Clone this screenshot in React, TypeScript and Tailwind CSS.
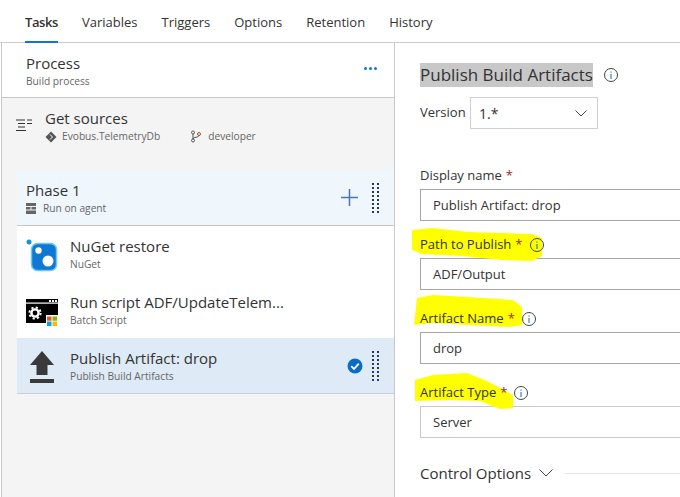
import React from "react";

const font = { fontFamily: '"Open Sans", "Noto Sans", sans-serif' };

function Info({ className = "" }: { className?: string }) {
  return (
    <svg width="16" height="16" viewBox="0 0 16 16" className={className} fill="none">
      <circle cx="8" cy="8" r="6.5" stroke="#444" strokeWidth="1" />
      <rect x="7.5" y="7" width="1" height="5" fill="#0b6cc4" />
      <rect x="7.5" y="4.5" width="1" height="1.2" fill="#0b6cc4" />
    </svg>
  );
}

function Grip() {
  return (
    <svg width="9" height="30" viewBox="0 0 9 30" className="shrink-0">
      {Array.from({ length: 8 }).map((_, i) => (
        <g key={i}>
          <rect x="1" y={i * 4} width="2" height="2" fill={i % 2 ? "#1e3f78" : "#333"} />
          <rect x="6" y={i * 4} width="2" height="2" fill={i % 2 ? "#1e3f78" : "#333"} />
        </g>
      ))}
    </svg>
  );
}

function NuGet() {
  return (
    <svg width="32" height="34" viewBox="0 0 32 34" className="shrink-0 mt-[4px]">
      <circle cx="3" cy="3" r="2.5" fill="#0d96e0" />
      <rect x="5.5" y="4.5" width="25" height="27" rx="6" fill="#0f78d4" stroke="#6cc8f2" strokeWidth="1.5" />
      <circle cx="12.5" cy="11.5" r="3.2" fill="#fff" />
      <circle cx="22" cy="22" r="5.5" fill="#fff" />
    </svg>
  );
}

function Batch() {
  return (
    <svg width="32" height="27" viewBox="0 0 32 27" className="shrink-0 mt-[5px]">
      <rect x="0" y="0" width="32" height="24" fill="#000" />
      <rect x="0" y="3.5" width="32" height="1.2" fill="#fff" />
      <rect x="23" y="1" width="2" height="2" fill="#fff" />
      <rect x="26" y="1" width="2" height="2" fill="#fff" />
      <rect x="29" y="1" width="2" height="2" fill="#fff" />
      <circle cx="9" cy="14" r="3.6" fill="none" stroke="#fff" strokeWidth="2.4" />
      <circle cx="9" cy="14" r="5.6" fill="none" stroke="#fff" strokeWidth="2" strokeDasharray="2.2 2.2" />
      <rect x="20" y="16" width="12" height="11" fill="#fff" />
      <rect x="21" y="17.5" width="4.5" height="4.2" fill="#f25022" />
      <rect x="26.5" y="17.5" width="4.5" height="4.2" fill="#7fba00" />
      <rect x="21" y="22.5" width="4.5" height="4.5" fill="#00a4ef" />
      <rect x="26.5" y="22.5" width="4.5" height="4.5" fill="#ffb900" />
    </svg>
  );
}

function Upload() {
  return (
    <svg width="24" height="32" viewBox="0 0 24 32" className="shrink-0 ml-[4px] mt-[2px]">
      <path d="M12 0 L24 14 L17.5 14 L17.5 24 L6.5 24 L6.5 14 L0 14 Z" fill="#3a3a3a" />
      <rect x="0" y="28" width="24" height="4" fill="#3a3a3a" />
    </svg>
  );
}

function Row({ icon, title, sub, selected }: { icon: React.ReactNode; title: string; sub: string; selected?: boolean }) {
  return (
    <div className={`h-[56px] flex items-center pl-[9px] pr-[14px] ${selected ? "bg-[#deeaf6] border-b border-[#c8d0d8]" : "bg-white"}`}>
      <div className="w-[44px] flex justify-start">{icon}</div>
      <div className="flex-1 min-w-0">
        <div className="text-[15px] leading-[20px] text-[#333]">{title}</div>
        <div className="text-[10.2px] leading-[15px] text-[#666] mt-[1px]">{sub}</div>
      </div>
      {selected && (
        <svg width="16" height="16" viewBox="0 0 16 16" className="mr-[8px]">
          <circle cx="8" cy="8" r="7.5" fill="#0b6cc4" />
          <path d="M4.2 8.2 L7 11 L11.8 5.6" fill="none" stroke="#fff" strokeWidth="1.8" />
        </svg>
      )}
      {selected && <Grip />}
    </div>
  );
}

function Field({ label, value, info, blob, labelClass = "mt-0", inputClass = "border-[#a6a6a6]" }: {
  label: string; value: string; info?: boolean; blob?: React.ReactNode; labelClass?: string; inputClass?: string;
}) {
  return (
    <div className={labelClass}>
      <div className="relative h-[20px] flex items-center pt-[2px] text-[13px] text-[#333]">
        {blob}
        <span className="relative">{label}</span>
        <span className="relative text-[#a4262c] ml-[4px]">*</span>
        {info && <Info className="relative ml-[6px]" />}
      </div>
      <div className={`mt-[4px] h-[32px] border border-r-0 flex items-center pl-[12px] pt-[2px] text-[13px] text-[#333] ${inputClass}`}>
        {value}
      </div>
    </div>
  );
}

export default function App() {
  const tabs = ["Variables", "Triggers", "Options", "Retention", "History"];
  return (
    <div style={font} className="w-[680px] h-[497px] overflow-hidden bg-white flex flex-col">
      <div className="h-[43px] border-b border-[#cccccc] flex gap-[24px] pl-[25px] text-[13px] text-[#333] shrink-0">
        <div className="h-[43px] pt-[13px] font-semibold tracking-[-0.4px] border-b-[2px] border-[#0b78d4]">Tasks</div>
        {tabs.map((t) => (
          <div key={t} className="h-[43px] pt-[13px]">{t}</div>
        ))}
      </div>
      <div className="flex flex-1 min-h-0">
        <div className="w-[394px] shrink-0 ml-[1px] border-l border-r border-[#c8c8c8] bg-[#f4f4f4] flex flex-col">
          <div className="h-[55px] bg-white border-b border-[#c8c8c8] flex items-center pl-[24px] pr-[17px] shrink-0">
            <div className="flex-1 mt-[2px]">
              <div className="text-[15px] leading-[20px] text-[#333]">Process</div>
              <div className="text-[10.2px] leading-[15px] text-[#666] mt-[1px]">Build process</div>
            </div>
            <div className="flex gap-[2px] -mt-[3px]">
              {[0, 1, 2].map((i) => <span key={i} className="w-[3px] h-[3px] rounded-full bg-[#0b78d4]" />)}
            </div>
          </div>
          <div className="h-[72px] flex pl-[14px] pt-[10px] shrink-0">
            <svg width="16" height="14" viewBox="0 0 16 14" className="mt-[10px] shrink-0">
              <path d="M0 2h9M11 2h5M2 5.5h7M11 5.5h5M2 9h7M0 12.5h10" stroke="#333" strokeWidth="1" fill="none" />
            </svg>
            <div className="ml-[13px]">
              <div className="text-[15px] leading-[20px] text-[#333]">Get sources</div>
              <div className="flex items-center text-[10.2px] leading-[15px] text-[#666] mt-[1px]">
                <svg width="12" height="12" viewBox="0 0 12 12" className="mr-[5px]">
                  <path d="M6 .5 L11.5 6 L6 11.5 L.5 6 Z" fill="#555" />
                  <path d="M5 3.5 L7.5 6 L5 8.5" fill="none" stroke="#fff" strokeWidth="1" />
                </svg>
                <span>Evobus.TelemetryDb</span>
                <svg width="12" height="13" viewBox="0 0 12 13" className="ml-[30px] mr-[6px]">
                  <circle cx="3" cy="2.5" r="1.5" fill="none" stroke="#555" />
                  <circle cx="3" cy="10.5" r="1.5" fill="none" stroke="#555" />
                  <circle cx="9" cy="4" r="1.5" fill="none" stroke="#a0522d" />
                  <path d="M3 4v5M9 5.5c0 2-6 1.5-6 3.5" fill="none" stroke="#555" />
                </svg>
                <span>developer</span>
              </div>
            </div>
          </div>
          <div className="ml-[15px] flex flex-col shrink-0">
            <div className="h-[56px] bg-[#eff6fc] border-b border-[#c8c8c8] flex items-center pl-[9px] pr-[14px]">
              <div className="flex-1">
                <div className="text-[15px] leading-[20px] text-[#333]">Phase 1</div>
                <div className="flex items-center text-[10.2px] leading-[15px] text-[#666] mt-[1px]">
                  <svg width="10" height="11" viewBox="0 0 10 11" className="mr-[7px]">
                    <path d="M0 0h10v11H0z" fill="#666" />
                    <path d="M0 3.5h10M0 7h10M5 3.5V7" stroke="#eff6fc" strokeWidth="1" />
                  </svg>
                  Run on agent
                </div>
              </div>
              <svg width="17" height="17" viewBox="0 0 17 17" className="mr-[13px]">
                <path d="M8.5 0v17M0 8.5h17" stroke="#4a76b8" strokeWidth="1.5" />
              </svg>
              <Grip />
            </div>
            <Row icon={<NuGet />} title="NuGet restore" sub="NuGet" />
            <Row icon={<Batch />} title="Run script ADF/UpdateTelem..." sub="Batch Script" />
            <Row icon={<Upload />} title="Publish Artifact: drop" sub="Publish Build Artifacts" selected />
          </div>
        </div>
        <div className="flex-1 min-w-0 pl-[25px] pt-[20px]">
          <div className="flex items-center h-[24px]">
            <span className="bg-[#c8c8c8] text-[17px] leading-[24px] text-[#333] w-[173px] whitespace-nowrap">Publish Build Artifacts</span>
            <Info className="ml-[10px]" />
          </div>
          <div className="flex items-center mt-[10px] text-[13px] text-[#333]">
            <span className="w-[50px]">Version</span>
            <div className="w-[128px] h-[32px] border border-[#d0d0d0] flex items-center justify-between pl-[8px] pr-[10px]">
              <span className="text-[14px]">1.*</span>
              <svg width="12" height="7" viewBox="0 0 12 7"><path d="M.5.5 L6 6 L11.5.5" fill="none" stroke="#444" /></svg>
            </div>
          </div>
          <Field labelClass="mt-[36px]" label="Display name" value="Publish Artifact: drop" />
          <Field
            labelClass="mt-[13px]"
            label="Path to Publish"
            value="ADF/Output"
            info
            blob={
              <svg width="130" height="33" className="absolute -left-[8px] -top-[6px]" viewBox="0 0 130 33">
                <path d="M0 2 L20 0 C35 1 45 3 55 4 L120 6 L130 10 L130 28 L120 33 L90 32 L50 28 L10 26 L0 22 Z" fill="#ffff00" />
              </svg>
            }
          />
          <Field
            labelClass="mt-[18px]"
            label="Artifact Name"
            value="drop"
            info
            blob={
              <svg width="110" height="33" className="absolute -left-[7px] -top-[13px]" viewBox="0 0 110 33">
                <path d="M4 3 L20 0 L54 2 L100 5 L109 12 L109 30 L97 32 L54 30 L20 28 L1 30 Z" fill="#ffff00" />
              </svg>
            }
          />
          <Field
            labelClass="mt-[18px]"
            label="Artifact Type"
            value="Server"
            info
            inputClass="border-[#c8c8c8]"
            blob={
              <svg width="100" height="36" className="absolute -left-[6px] -top-[9px]" viewBox="0 0 100 36">
                <path d="M1 7 L19 2 L53 0 L73 8 L99 22 L99 35 L86 36 L66 28 L36 27 L1 28 Z" fill="#ffff00" />
              </svg>
            }
          />
          <div className="flex items-center mt-[23px] h-[24px]">
            <span className="text-[15px] text-[#333] whitespace-nowrap">Control Options</span>
            <svg width="14" height="8" viewBox="0 0 14 8" className="ml-[8px] shrink-0"><path d="M.5.5 L7 7 L13.5.5" fill="none" stroke="#444" /></svg>
            <div className="flex-1 h-px bg-[#e6e6e6] ml-[12px]" />
          </div>
        </div>
      </div>
    </div>
  );
}
